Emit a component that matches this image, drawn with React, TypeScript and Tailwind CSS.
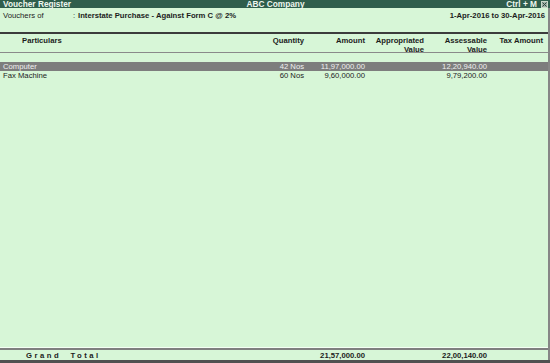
const FONT = "font-['Liberation_Sans',Arial,sans-serif]";
const COLS = "grid grid-cols-[1fr_60px_61px_59px_63px_56px] pr-[5px]";

const rows = [
  { name: "Computer", qty: "42 Nos", amount: "11,97,000.00", approp: "", assess: "12,20,940.00", tax: "", active: true },
  { name: "Fax Machine", qty: "60 Nos", amount: "9,60,000.00", approp: "", assess: "9,79,200.00", tax: "", active: false },
];

function CloseBox() {
  return (
    <span className="ml-[4px] flex h-[7px] w-[7px] items-center justify-center border border-[#c8d8c8] bg-[#9fb0a6]">
      <svg width="5" height="5" viewBox="0 0 5 5">
        <path d="M0.5 0.5 L4.5 4.5 M4.5 0.5 L0.5 4.5" stroke="#2e4a3e" strokeWidth="1" />
      </svg>
    </span>
  );
}

export default function App() {
  return (
    <div className={`${FONT} flex h-[363px] w-[550px] flex-col bg-[#d7f6d7] text-[7.7px] leading-[9px] text-[#1c1c1c]`}>
      {/* title bar */}
      <div className="flex h-[8px] items-center bg-[#2f5e4c] text-[8.3px] font-bold leading-[8px] text-[#eef6ee]">
        <div className="flex-1 pl-[3px]">Voucher Register</div>
        <div>ABC Company</div>
        <div className="flex flex-1 items-center justify-end pr-[2px]">
          <span>Ctrl + M</span>
          <CloseBox />
        </div>
      </div>

      <div className="flex flex-1 flex-col border-r-2 border-[#868686]">
        {/* info line */}
        <div className="flex h-[24px] items-start pt-[3px]">
          <span className="w-[73px] pl-[3px]">Vouchers of</span>
          <span className="w-[5px]">:</span>
          <span className="flex-1 font-bold">Interstate Purchase - Against Form C @ 2%</span>
          <span className="pr-[3px] font-bold">1-Apr-2016 to 30-Apr-2016</span>
        </div>

        {/* column header */}
        <div className={`${COLS} h-[21px] border-t-2 border-b border-t-[#3c3c3c] border-b-[#8a8a8a] pt-[2px] font-bold`}>
          <div className="pl-[22px]">Particulars</div>
          <div className="text-right">Quantity</div>
          <div className="text-right">Amount</div>
          <div className="text-right">Appropriated<br />Value</div>
          <div className="text-right">Assessable<br />Value</div>
          <div className="text-right">Tax Amount</div>
        </div>

        {/* body */}
        <div className="flex-1 pt-[9px]">
          {rows.map((r) => (
            <div
              key={r.name}
              className={`${COLS} h-[9px] items-center ${r.active ? "bg-[#7d7d7d] text-[#f0f0f0]" : ""}`}
            >
              <div className="pl-[3px]">{r.name}</div>
              <div className="text-right">{r.qty}</div>
              <div className="text-right">{r.amount}</div>
              <div className="text-right">{r.approp}</div>
              <div className="text-right">{r.assess}</div>
              <div className="text-right">{r.tax}</div>
            </div>
          ))}
        </div>

        {/* grand total */}
        <div className={`${COLS} h-[12px] items-center border-t-2 border-[#7f7f7f] font-bold shadow-[0_-1px_0_#f4fff4]`}>
          <div className="pl-[26px] tracking-[2.5px]">Grand&nbsp; Total</div>
          <div />
          <div className="text-right">21,57,000.00</div>
          <div />
          <div className="text-right">22,00,140.00</div>
          <div />
        </div>
      </div>
      <div className="h-[3px] bg-[#505050]" />
    </div>
  );
}
